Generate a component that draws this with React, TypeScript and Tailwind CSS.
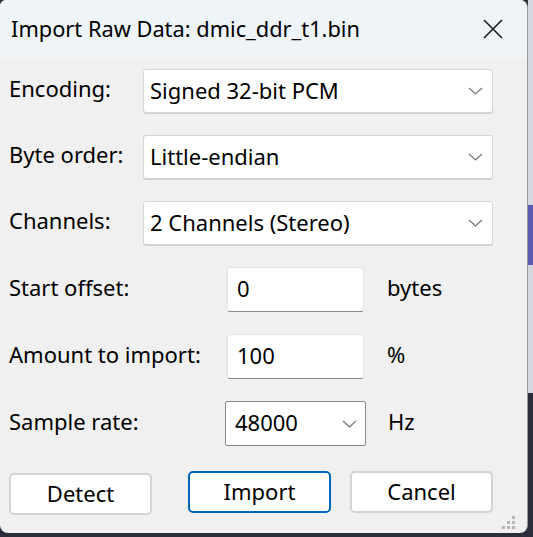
import React from "react";

const FONT = { fontFamily: '"Noto Sans", "Open Sans", sans-serif' };

function Chevron() {
  return (
    <svg width="15" height="8" viewBox="0 0 15 8" fill="none" className="shrink-0">
      <path d="M1 1l6.5 6 6.5-6" stroke="#707070" strokeWidth="1.1" />
    </svg>
  );
}

function Label({ text, w }: { text: string; w: string }) {
  return <span className={`${w} pb-[6px]`}>{text}</span>;
}

function Select({ value }: { value: string }) {
  return (
    <div className="flex h-[44px] w-[350px] items-center justify-between rounded-[3px] border border-[#d6d6d6] bg-white pl-[6px] pr-[9px] shadow-[0_1px_0_#cfcfcf]">
      <span className="pb-[2px]">{value}</span>
      <Chevron />
    </div>
  );
}

function Field({ value }: { value: string }) {
  return (
    <div className="flex h-[45px] w-[137px] items-center rounded-[3px] border border-[#e3e3e3] border-b-[#8a8a8a] bg-white pb-[3px] pl-[9px]">
      {value}
    </div>
  );
}

function Btn({ label, primary }: { label: string; primary?: boolean }) {
  return (
    <button
      className={`flex h-[42px] w-[143px] items-center justify-center rounded-[5px] bg-white pb-[2px] ${
        primary ? "border-2 border-[#0067c0]" : "border-2 border-[#d3d3d3]"
      }`}
    >
      {label}
    </button>
  );
}

export default function App() {
  return (
    <div className="flex h-[537px] w-[533px] overflow-hidden bg-[#2b2e3b] text-[22px] leading-[28px] text-black" style={FONT}>
      <div className="flex h-[533px] w-[528px] flex-col overflow-hidden rounded-[8px] rounded-tl-[6px] border-r border-[#9b9b9b] bg-[#f0f0f0]">
        <div className="flex h-[58px] shrink-0 items-center justify-between bg-[#eff4f9] pl-[11px] pr-[24px]">
          <span className="text-[21.8px]">Import Raw Data: dmic_ddr_t1.bin</span>
          <svg width="20" height="20" viewBox="0 0 20 20" fill="none">
            <path d="M1 1l18 18M19 1L1 19" stroke="#1a1a1a" strokeWidth="1.6" />
          </svg>
        </div>

        <div className="flex flex-col gap-[22px] pl-[9px] pt-[11px]">
          <div className="flex items-center">
            <Label text="Encoding:" w="w-[134px]" />
            <Select value="Signed 32-bit PCM" />
          </div>
          <div className="flex items-center">
            <Label text="Byte order:" w="w-[134px]" />
            <Select value="Little-endian" />
          </div>
          <div className="flex items-center">
            <Label text="Channels:" w="w-[134px]" />
            <Select value="2 Channels (Stereo)" />
          </div>
          <div className="flex items-center">
            <Label text="Start offset:" w="w-[218px]" />
            <Field value="0" />
            <span className="ml-[23px] pb-[6px]">bytes</span>
          </div>
          <div className="flex items-center">
            <Label text="Amount to import:" w="w-[218px]" />
            <Field value="100" />
            <span className="ml-[23px] pb-[6px]">%</span>
          </div>
          <div className="flex items-center">
            <Label text="Sample rate:" w="w-[216px]" />
            <div className="flex h-[45px] w-[141px] items-center justify-between rounded-[2px] border border-[#8a8a8a] bg-white pl-[9px] pr-[8px]">
              <span className="pb-[3px]">48000</span>
              <Chevron />
            </div>
            <span className="ml-[22px] pb-[6px]">Hz</span>
          </div>
        </div>

        <div className="relative flex flex-1 items-start pl-[9px] pt-[25px]">
          <div className="mt-[2px]">
            <Btn label="Detect" />
          </div>
          <div className="ml-[36px]">
            <Btn label="Import" primary />
          </div>
          <div className="ml-[19px]">
            <Btn label="Cancel" />
          </div>
          <div className="absolute bottom-[4px] right-[12px] grid grid-cols-3 gap-[2px]">
            <span className="h-[3px] w-[3px]" />
            <span className="h-[3px] w-[3px]" />
            <span className="h-[3px] w-[3px] bg-[#b5b5b5]" />
            <span className="h-[3px] w-[3px]" />
            <span className="h-[3px] w-[3px] bg-[#b5b5b5]" />
            <span className="h-[3px] w-[3px] bg-[#b5b5b5]" />
            <span className="h-[3px] w-[3px] bg-[#b5b5b5]" />
            <span className="h-[3px] w-[3px] bg-[#b5b5b5]" />
            <span className="h-[3px] w-[3px] bg-[#b5b5b5]" />
          </div>
        </div>
      </div>

      <div className="flex w-[5px] flex-col">
        <div className="h-[205px] bg-[#d3d7de]" />
        <div className="h-[60px] bg-[#5a5ab0]" />
        <div className="h-[128px] bg-[#d3d7de]" />
        <div className="flex-1 bg-[#2b2e3b]" />
      </div>
    </div>
  );
}
